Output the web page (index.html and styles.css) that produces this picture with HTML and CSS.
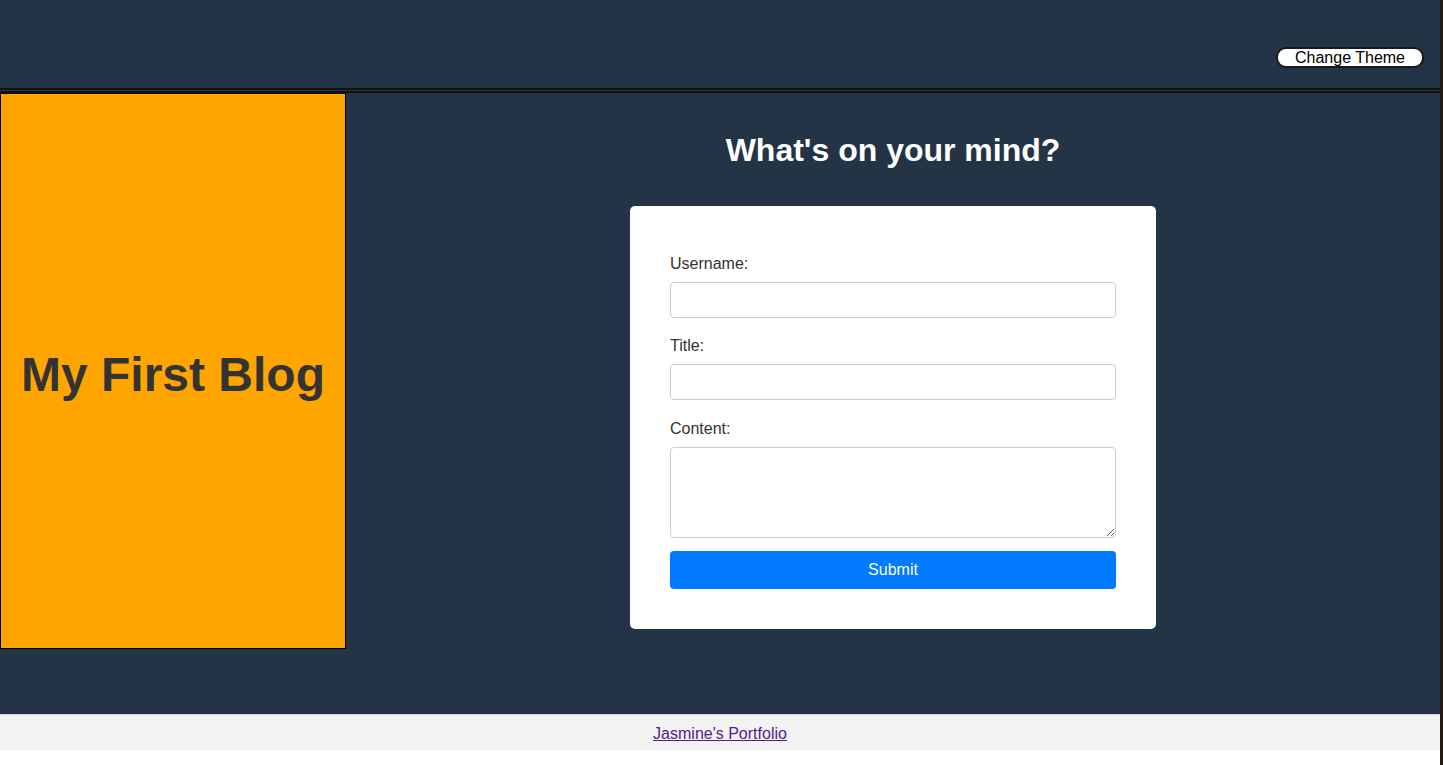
FILE: index.html
```html
<!DOCTYPE html>
<html lang="en">
<head>
<meta charset="utf-8">
<title>My First Blog</title>
<link rel="stylesheet" href="styles.css">
</head>
<body>
<div class="page">
  <header class="topbar">
    <button class="theme-btn" type="button">Change Theme</button>
  </header>
  <main class="layout">
    <aside class="sidebar">
      <h1 class="blog-title">My First Blog</h1>
    </aside>
    <section class="content">
      <h2 class="prompt">What's on your mind?</h2>
      <form class="card">
        <label class="field-label" for="username">Username:</label>
        <input class="field-input" id="username" type="text">
        <label class="field-label" for="title">Title:</label>
        <input class="field-input" id="title" type="text">
        <label class="field-label field-label-content" for="content">Content:</label>
        <textarea class="field-area" id="content"></textarea>
        <button class="submit-btn" type="button">Submit</button>
      </form>
    </section>
  </main>
  <footer class="footer">
    <a class="footer-link" href="#">Jasmine's Portfolio</a>
  </footer>
</div>
</body>
</html>
```
FILE: styles.css
```css
html {
  background: #221c12;
}
body {
  margin: 0;
  font-family: "Liberation Sans", Arial, Helvetica, sans-serif;
}
.page {
  width: 1440px;
  height: 765px;
  background: #ffffff;
}
.topbar {
  height: 88px;
  background: #243447;
  border-bottom: 5px double #111111;
  display: flex;
  justify-content: flex-end;
  align-items: flex-end;
  padding: 0 16px 0 0;
}
.theme-btn {
  margin-bottom: 20px;
  height: 21px;
  width: 148px;
  padding: 0 17px;
  background: #ffffff;
  color: #000000;
  border: 2px solid #1a1a1a;
  border-radius: 10px;
  font-family: "Liberation Sans", Arial, sans-serif;
  font-size: 16px;
  line-height: 17px;
  box-sizing: border-box;
}
.layout {
  display: flex;
  height: 621px;
  background: #243447;
}
.sidebar {
  width: 346px;
  height: 556px;
  box-sizing: border-box;
  border: 1px solid #000000;
  background: #ffa500;
  display: flex;
  align-items: center;
  justify-content: center;
  padding-top: 6px;
}
.blog-title {
  margin: 0;
  font-size: 48px;
  font-weight: bold;
  color: #333333;
}
.content {
  flex: 1;
  display: flex;
  flex-direction: column;
  align-items: center;
}
.prompt {
  margin: 39px 0 37px;
  font-size: 32px;
  line-height: 37px;
  font-weight: bold;
  color: #ffffff;
}
.card {
  width: 526px;
  box-sizing: border-box;
  padding: 40px;
  background: #ffffff;
  border-radius: 5px;
  display: flex;
  flex-direction: column;
}
.field-label {
  display: block;
  margin: 9px 0 9px;
  font-size: 16px;
  line-height: 18px;
  color: #333333;
}
.field-label-content {
  margin-top: 10px;
}
.field-input {
  display: block;
  height: 36px;
  box-sizing: border-box;
  border: 1px solid #cccccc;
  border-radius: 4px;
  margin: 0 0 10px;
  padding: 0 8px;
  font-size: 16px;
}
.field-area {
  display: block;
  height: 91px;
  box-sizing: border-box;
  border: 1px solid #cccccc;
  border-radius: 4px;
  margin: 0 0 13px;
  padding: 8px;
  font-size: 16px;
  resize: vertical;
}
.submit-btn {
  height: 38px;
  border: none;
  border-radius: 4px;
  background: #007bff;
  color: #ffffff;
  font-family: "Liberation Sans", Arial, sans-serif;
  font-size: 16px;
}
.footer {
  height: 36px;
  box-sizing: border-box;
  border-top: 1px solid #d4d4d4;
  background: #f3f3f3;
  display: flex;
  justify-content: center;
  align-items: center;
  padding-top: 2px;
}
.footer-link {
  color: #551a8b;
  font-size: 16px;
  text-decoration: underline;
}
```
